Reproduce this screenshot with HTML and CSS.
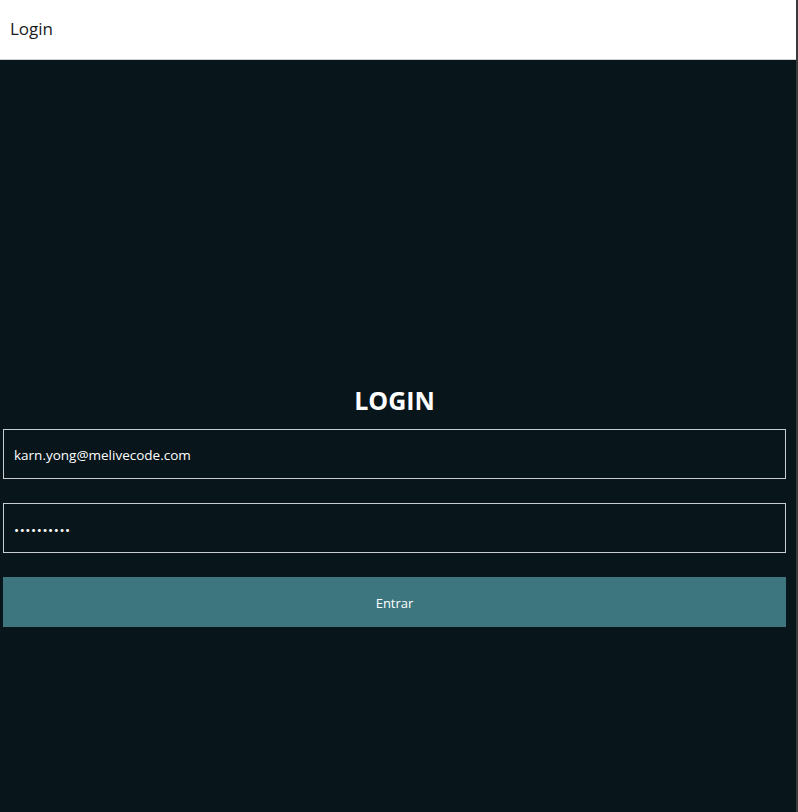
FILE: index.html
```html
<!DOCTYPE html>
<html lang="pt">
<head>
<meta charset="utf-8">
<title>Login</title>
<link rel="stylesheet" href="styles.css">
</head>
<body>
<div class="frame">
  <header class="topbar">
    <span class="topbar-title">Login</span>
  </header>
  <main class="main">
    <form class="login-form" onsubmit="return false">
      <h1 class="login-title">LOGIN</h1>
      <input class="field" type="email" value="karn.yong@melivecode.com">
      <input class="field field-password" type="password" value="1234567890">
      <button class="submit" type="submit">Entrar</button>
    </form>
  </main>
</div>
</body>
</html>
```

FILE: styles.css
```css
html, body {
  margin: 0;
  padding: 0;
  height: 100%;
}
body {
  font-family: "Open Sans", "Noto Sans", sans-serif;
  background: #08151b;
  overflow: hidden;
}
.frame {
  box-sizing: border-box;
  height: 812px;
  width: 798px;
  border-right: 2px solid #3b3b3b;
  display: flex;
  flex-direction: column;
}
.topbar {
  height: 59px;
  background: #ffffff;
  border-bottom: 1px solid #d0d0d0;
  display: flex;
  align-items: center;
  padding-left: 10px;
  flex-shrink: 0;
}
.topbar-title {
  font-size: 17px;
  color: #1a1a1a;
  margin-top: -2px;
}
.main {
  flex: 1;
  background: #08151b;
  padding: 323px 10px 0 3px;
}
.login-form {
  display: flex;
  flex-direction: column;
}
.login-title {
  margin: 0 0 12px;
  text-align: center;
  color: #ffffff;
  font-size: 25px;
  font-weight: 700;
  line-height: 34px;
  height: 34px;
}
.field {
  box-sizing: border-box;
  height: 50px;
  margin: 0 0 24px;
  background: #08151b;
  border: 1px solid #c8cdd0;
  border-radius: 0;
  color: #ffffff;
  font-family: "Open Sans", "Noto Sans", sans-serif;
  font-size: 13.5px;
  padding: 1px 10px 0;
  outline: none;
}
.field-password {
  letter-spacing: 0.6px;
  padding-top: 3px;
}
.submit {
  height: 50px;
  border: none;
  background: #3e7680;
  color: #ffffff;
  font-family: "Open Sans", "Noto Sans", sans-serif;
  font-size: 13px;
  padding-top: 2px;
  cursor: pointer;
}
```
